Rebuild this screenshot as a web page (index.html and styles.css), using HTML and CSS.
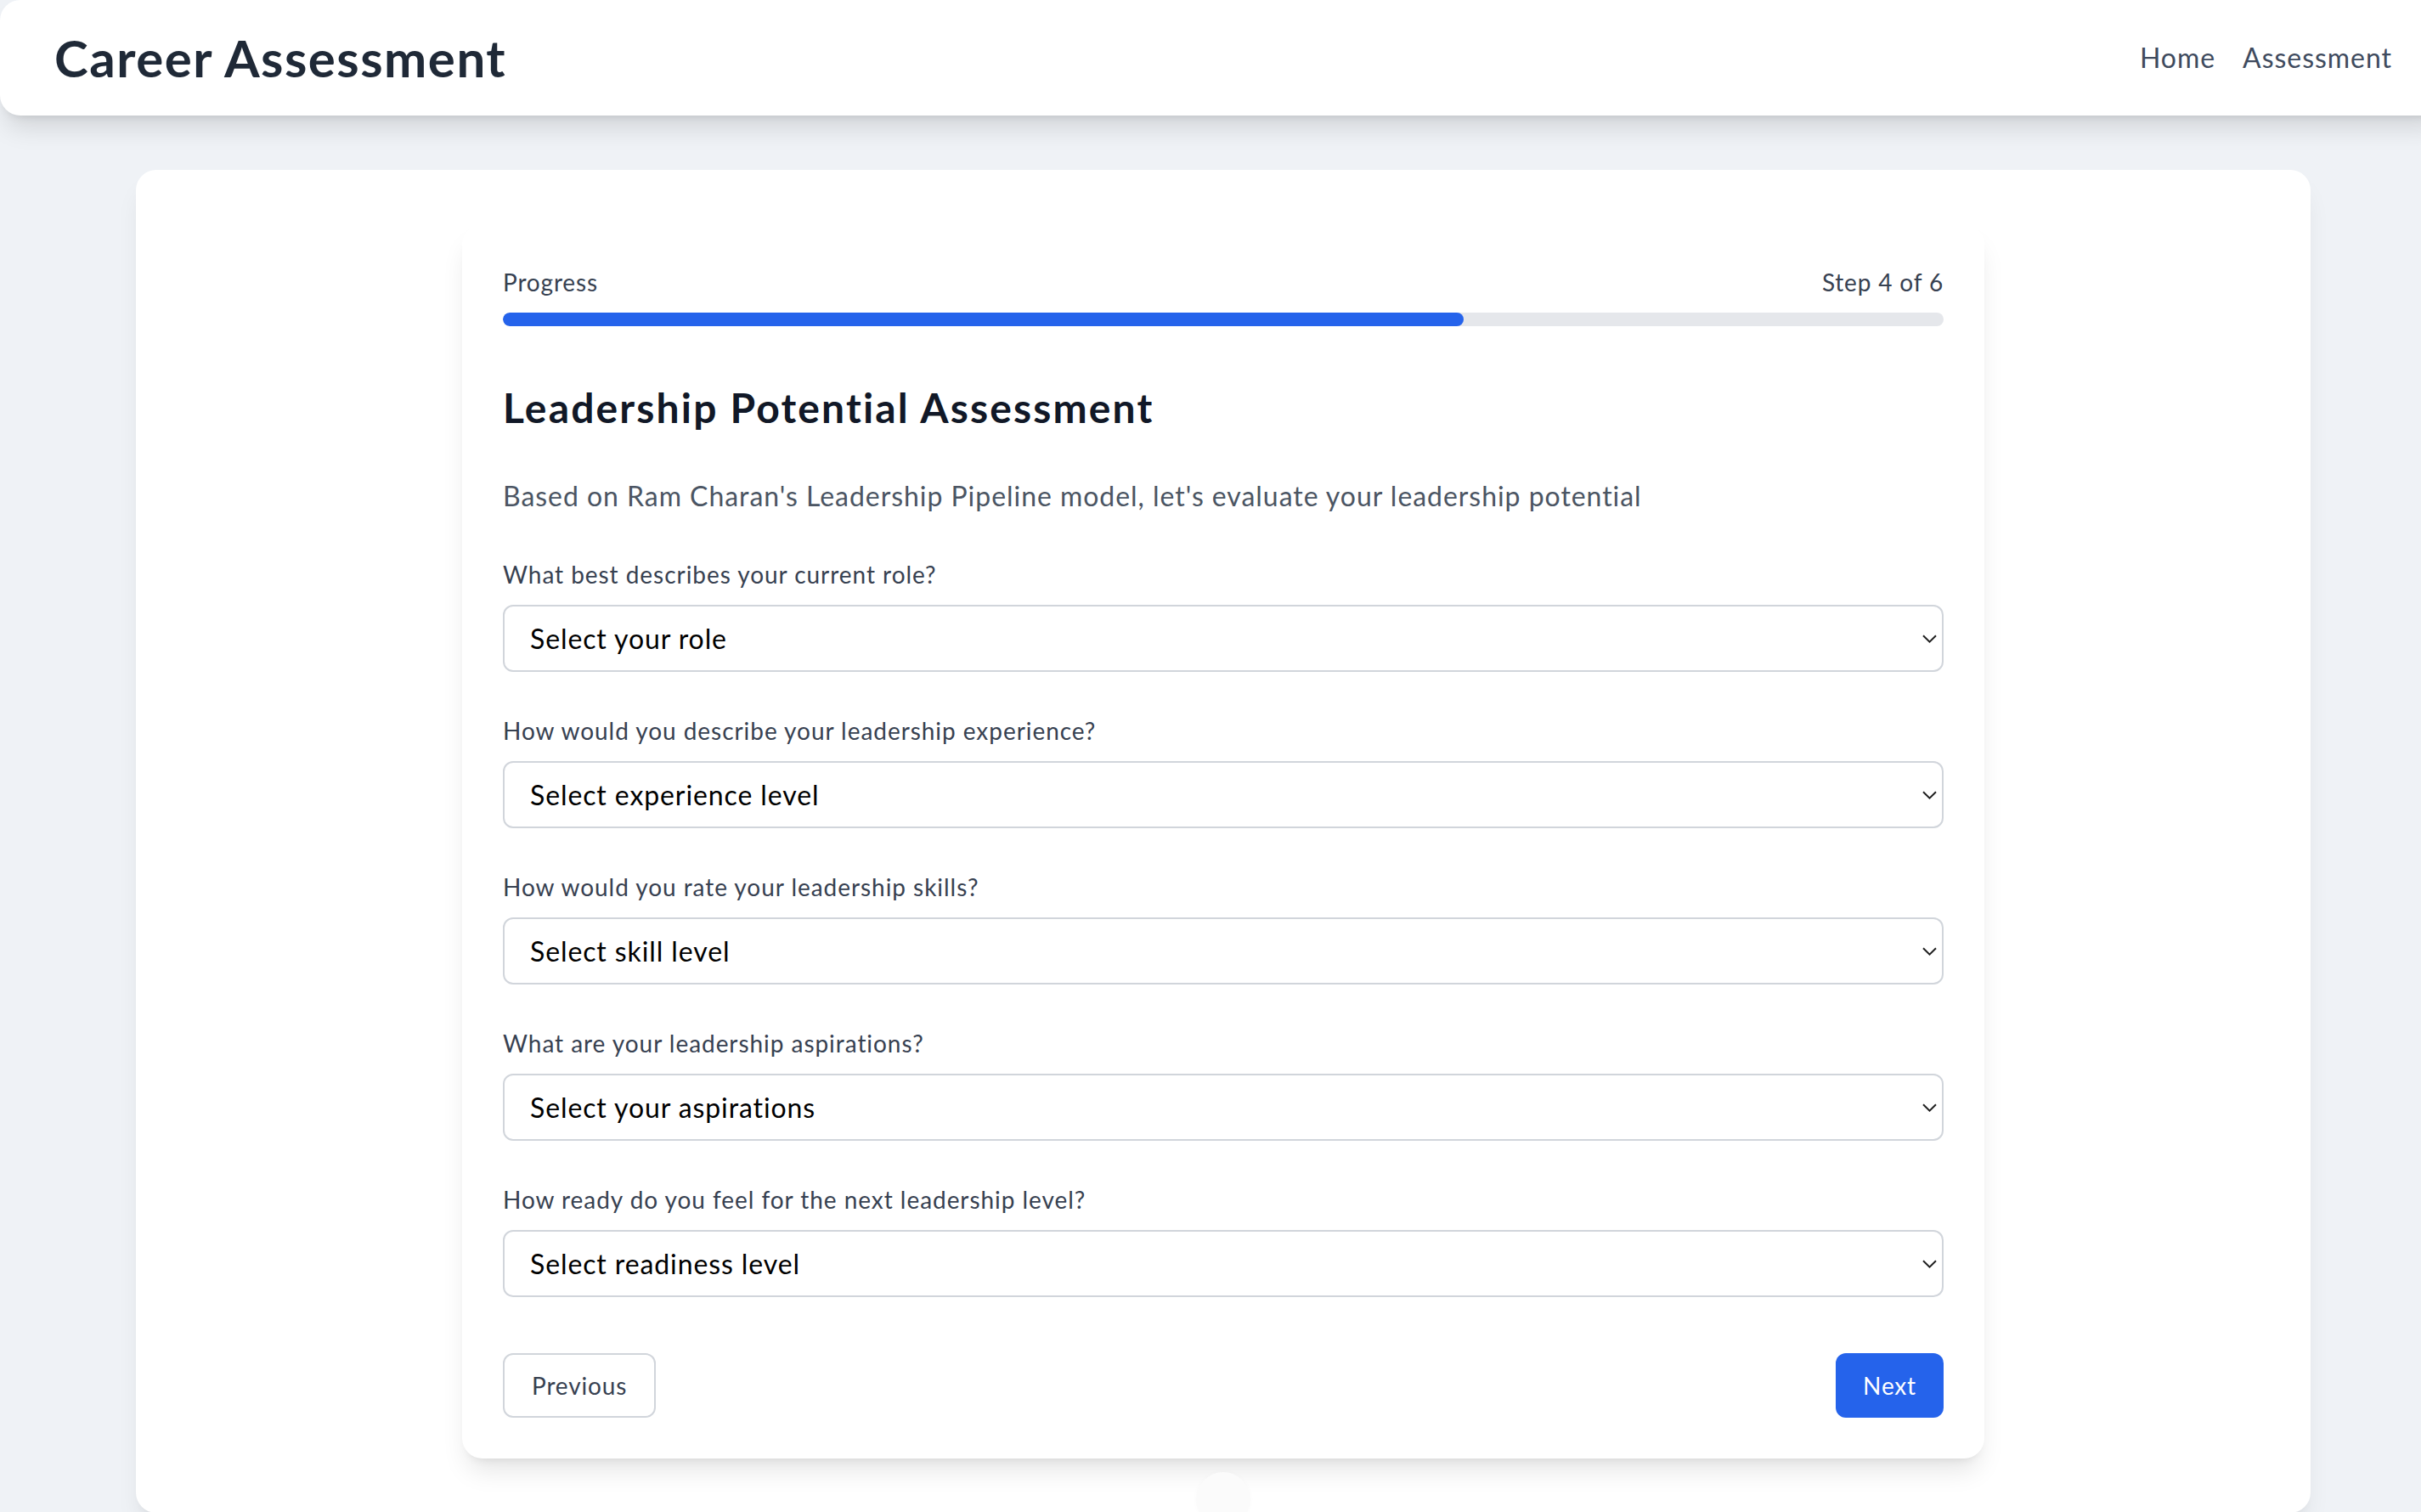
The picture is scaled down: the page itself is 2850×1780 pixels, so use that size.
FILE: index.html
```html
<!DOCTYPE html>
<html lang="en">
<head>
<meta charset="utf-8">
<title>Career Assessment</title>
<link rel="stylesheet" href="styles.css">
</head>
<body>
<header class="topbar">
  <h1 class="brand">Career Assessment</h1>
  <nav class="nav">
    <a class="nav-link" href="#">Home</a>
    <a class="nav-link" href="#">Assessment</a>
  </nav>
</header>
<main class="page">
  <section class="panel">
    <div class="step-card">
      <div class="progress-head">
        <span>Progress</span>
        <span>Step 4 of 6</span>
      </div>
      <div class="progress-track"><div class="progress-fill" style="width: 66.6667%"></div></div>
      <h2 class="step-title">Leadership Potential Assessment</h2>
      <p class="step-desc">Based on Ram Charan's Leadership Pipeline model, let's evaluate your leadership potential</p>
      <div class="fields">
        <div class="field">
          <label class="field-label">What best describes your current role?</label>
          <div class="select-wrap">
            <select class="select"><option>Select your role</option></select>
            <svg class="chevron" viewBox="0 0 17 10" width="17" height="10"><path d="M1 1.2 L8.5 8.6 L16 1.2" fill="none" stroke="#1f1f1f" stroke-width="2"/></svg>
          </div>
        </div>
        <div class="field">
          <label class="field-label">How would you describe your leadership experience?</label>
          <div class="select-wrap">
            <select class="select"><option>Select experience level</option></select>
            <svg class="chevron" viewBox="0 0 17 10" width="17" height="10"><path d="M1 1.2 L8.5 8.6 L16 1.2" fill="none" stroke="#1f1f1f" stroke-width="2"/></svg>
          </div>
        </div>
        <div class="field">
          <label class="field-label">How would you rate your leadership skills?</label>
          <div class="select-wrap">
            <select class="select"><option>Select skill level</option></select>
            <svg class="chevron" viewBox="0 0 17 10" width="17" height="10"><path d="M1 1.2 L8.5 8.6 L16 1.2" fill="none" stroke="#1f1f1f" stroke-width="2"/></svg>
          </div>
        </div>
        <div class="field">
          <label class="field-label">What are your leadership aspirations?</label>
          <div class="select-wrap">
            <select class="select"><option>Select your aspirations</option></select>
            <svg class="chevron" viewBox="0 0 17 10" width="17" height="10"><path d="M1 1.2 L8.5 8.6 L16 1.2" fill="none" stroke="#1f1f1f" stroke-width="2"/></svg>
          </div>
        </div>
        <div class="field">
          <label class="field-label">How ready do you feel for the next leadership level?</label>
          <div class="select-wrap">
            <select class="select"><option>Select readiness level</option></select>
            <svg class="chevron" viewBox="0 0 17 10" width="17" height="10"><path d="M1 1.2 L8.5 8.6 L16 1.2" fill="none" stroke="#1f1f1f" stroke-width="2"/></svg>
          </div>
        </div>
      </div>
      <div class="actions">
        <button class="btn btn-secondary" type="button">Previous</button>
        <button class="btn btn-primary" type="button">Next</button>
      </div>
    </div>
    <div class="floating-dot"></div>
  </section>
</main>
</body>
</html>
```

FILE: styles.css
```css
html {
  overflow: hidden;
  background: #eff2f6;
}

body {
  margin: 0;
  width: 2880px;
  font-family: "Lato", "Noto Sans", sans-serif;
  color: #374151;
}

.topbar {
  display: flex;
  justify-content: space-between;
  align-items: center;
  padding: 32px 64px;
  background: #ffffff;
  border-radius: 24px;
  box-shadow: 0 20px 30px -6px rgba(0, 0, 0, 0.12), 0 8px 12px -8px rgba(0, 0, 0, 0.12);
  position: relative;
  z-index: 2;
}

.brand {
  margin: 0;
  font-size: 60px;
  line-height: 72px;
  font-weight: 700;
  letter-spacing: 0.025em;
  color: #1f2937;
}

.nav {
  display: flex;
  gap: 32px;
}

.nav-link {
  font-size: 32px;
  line-height: 48px;
  letter-spacing: 0.03em;
  color: #3f4b5e;
  text-decoration: none;
}

.page {
  padding: 64px 160px 0;
}

.panel {
  position: relative;
  background: #ffffff;
  border-radius: 24px;
  padding: 64px;
  box-shadow: 0 20px 30px -6px rgba(0, 0, 0, 0.08), 0 8px 12px -8px rgba(0, 0, 0, 0.08);
}

.step-card {
  max-width: 1792px;
  box-sizing: border-box;
  margin: 0 auto;
  padding: 48px;
  background: #ffffff;
  border-radius: 24px;
  box-shadow: 0 20px 30px -6px rgba(0, 0, 0, 0.1), 0 8px 12px -8px rgba(0, 0, 0, 0.1);
}

.progress-head {
  display: flex;
  justify-content: space-between;
  font-size: 28px;
  line-height: 40px;
  letter-spacing: 0.03em;
  color: #374151;
  margin-bottom: 16px;
}

.progress-track {
  height: 16px;
  border-radius: 8px;
  background: #e5e7eb;
  margin-bottom: 64px;
  overflow: hidden;
}

.progress-fill {
  height: 100%;
  border-radius: 8px;
  background: #2563eb;
}

.step-title {
  margin: 0 0 48px;
  font-size: 48px;
  line-height: 64px;
  font-weight: 700;
  letter-spacing: 0.045em;
  color: #111827;
}

.step-desc {
  margin: 0 0 48px;
  font-size: 32px;
  line-height: 48px;
  letter-spacing: 0.03em;
  color: #4b5563;
}

.fields {
  display: flex;
  flex-direction: column;
  gap: 49px;
}

.field-label {
  display: block;
  font-size: 28px;
  line-height: 40px;
  letter-spacing: 0.034em;
  color: #374151;
  margin-bottom: 16px;
}

.select-wrap {
  position: relative;
}

.select {
  display: block;
  width: 100%;
  height: 79px;
  box-sizing: border-box;
  padding: 0 30px;
  border: 2px solid #d1d5db;
  border-radius: 12px;
  background: #ffffff;
  font-family: inherit;
  font-size: 32px;
  letter-spacing: 0.028em;
  color: #000000;
  appearance: none;
  -webkit-appearance: none;
}

.chevron {
  position: absolute;
  right: 8px;
  top: 35px;
  pointer-events: none;
}

.actions {
  display: flex;
  justify-content: space-between;
  margin-top: 66px;
}

.btn {
  font-family: inherit;
  font-size: 28px;
  line-height: 40px;
  letter-spacing: 0.03em;
  border-radius: 12px;
  cursor: pointer;
}

.btn-secondary {
  padding: 16px 32px;
  border: 2px solid #d1d5db;
  background: #ffffff;
  color: #374151;
}

.btn-primary {
  padding: 18px 32px;
  border: none;
  background: #2563eb;
  color: #ffffff;
}

.floating-dot {
  position: absolute;
  left: 50%;
  bottom: -16px;
  width: 64px;
  height: 64px;
  margin-left: -32px;
  border-radius: 50%;
  background: #fbfbfb;
  box-shadow: 0 0 6px rgba(0, 0, 0, 0.02);
}
```
